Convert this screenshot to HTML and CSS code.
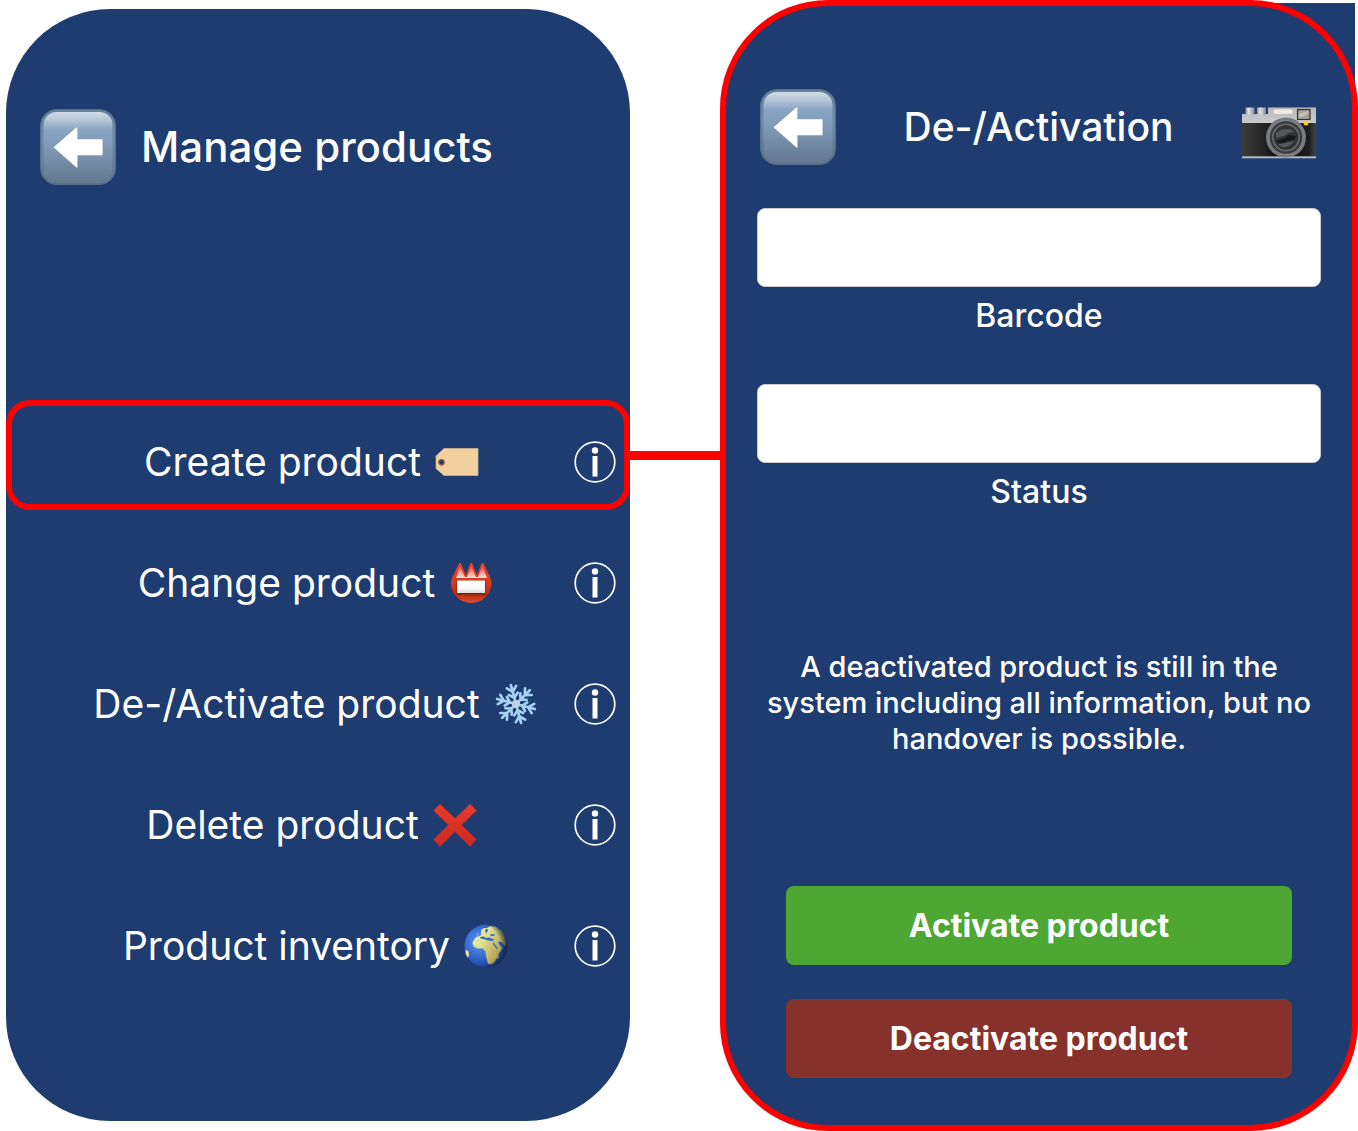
FILE: index.html
```html
<!DOCTYPE html>
<html lang="en">
<head>
<meta charset="utf-8">
<meta name="viewport" content="width=device-width, initial-scale=1">
<title>Manage products</title>
<link rel="stylesheet" href="styles.css">
</head>
<body>
<svg class="sprite" width="0" height="0" aria-hidden="true">
  <defs>
    <linearGradient id="keyEdge" x1="0" y1="0" x2="0" y2="1">
      <stop offset="0" stop-color="#657f9b"/><stop offset=".4" stop-color="#6c8aaa"/><stop offset="1" stop-color="#5c708a"/>
    </linearGradient>
    <linearGradient id="keyFace" x1="0" y1="0" x2="0" y2="1">
      <stop offset="0" stop-color="#d0dbe8"/><stop offset=".12" stop-color="#b3c4d6"/><stop offset=".25" stop-color="#88a4c3"/><stop offset=".45" stop-color="#819cba"/><stop offset="1" stop-color="#64788f"/>
    </linearGradient>
    <linearGradient id="badgeRed" x1="0" y1="0" x2="0" y2="1">
      <stop offset="0" stop-color="#e8442c"/><stop offset=".5" stop-color="#d33a20"/><stop offset=".8" stop-color="#b82a10"/><stop offset="1" stop-color="#e2502e"/>
    </linearGradient>
    <linearGradient id="badgeShine" x1="0" y1="0" x2="0" y2="1">
      <stop offset="0" stop-color="#f04a32"/><stop offset=".35" stop-color="#f0826e"/><stop offset="1" stop-color="#fbe6e2"/>
    </linearGradient>
    <linearGradient id="paper" x1="0" y1="0" x2="0" y2="1">
      <stop offset="0" stop-color="#fff"/><stop offset=".6" stop-color="#fafafa"/><stop offset="1" stop-color="#dcdcdc"/>
    </linearGradient>
    <linearGradient id="crossRed" x1="0" y1="0" x2="0" y2="1">
      <stop offset="0" stop-color="#ea3a2a"/><stop offset="1" stop-color="#cc2a20"/>
    </linearGradient>
    <linearGradient id="steel" x1="0" y1="0" x2="0" y2="1">
      <stop offset="0" stop-color="#b9babd"/><stop offset="1" stop-color="#c9cacd"/>
    </linearGradient>
    <linearGradient id="knob" x1="0" y1="0" x2="1" y2="0">
      <stop offset="0" stop-color="#8f9194"/><stop offset=".35" stop-color="#e4e5e6"/><stop offset="1" stop-color="#85878a"/>
    </linearGradient>
    <linearGradient id="leather" x1="0" y1="0" x2="1" y2="0">
      <stop offset="0" stop-color="#3c3c3c"/><stop offset=".3" stop-color="#242424"/><stop offset=".5" stop-color="#080808"/><stop offset=".9" stop-color="#1d1d1d"/><stop offset="1" stop-color="#444"/>
    </linearGradient>
    <radialGradient id="ocean" cx=".35" cy=".4" r=".65">
      <stop offset="0" stop-color="#5b9cf0"/><stop offset=".6" stop-color="#3263cc"/><stop offset="1" stop-color="#1d3c8c"/>
    </radialGradient>
    <linearGradient id="land" x1="0" y1="0" x2="1" y2=".6">
      <stop offset="0" stop-color="#f6f7c4"/><stop offset=".5" stop-color="#dfdf90"/><stop offset="1" stop-color="#a89a45"/>
    </linearGradient>
    <radialGradient id="night" cx=".36" cy=".48" r=".64">
      <stop offset=".72" stop-color="#10203c" stop-opacity="0"/><stop offset="1" stop-color="#14223c" stop-opacity=".85"/>
    </radialGradient>
    <path id="snow-arm" d="M0 0V-19.5M-4.800-17.500 0-12.500 4.800-17.500M-4.500-10.500 0-6.500 4.500-10.500"/>
  </defs>

  <symbol id="icon-back" viewBox="0 0 76 76">
    <rect x=".5" y=".5" width="75" height="75" rx="16" fill="url(#keyEdge)" stroke="#56708c"/>
    <rect x="3.5" y="3" width="69" height="71" rx="13" fill="url(#keyFace)"/>
    <path d="M13.300 38.300 36 18.500q1.700-1.300 1.700.8V30H62q.8 0 .8.8v14.800q0 .8-.8.8H37.700v11q0 2.200-1.700.8z" fill="#fff" stroke="#8d98a5" stroke-width=".5"/>
  </symbol>

  <symbol id="icon-info" viewBox="0 0 42 42">
    <circle cx="21" cy="21" r="19.8" fill="none" stroke="#fff" stroke-width="1.7"/>
    <circle cx="21" cy="9.5" r="3.2" fill="#fff"/>
    <rect x="18.5" y="15" width="5" height="20.5" fill="#fff"/>
  </symbol>

  <symbol id="icon-tag" viewBox="0 0 44 44">
    <path d="M9 8.500H43V35.500H9L1 28.500V16z" fill="#f2cf9f" stroke="#d9b98e" stroke-width=".7"/>
    <circle cx="6.500" cy="22.300" r="2.700" fill="#27345c" stroke="#8a5f50" stroke-width="1.300"/>
  </symbol>

  <symbol id="icon-badge" viewBox="0 0 44 44">
    <path d="M10 2.500q1-1.500 2 0L16.800 14 21.300 2.500q1-1.500 2 0L28 14 32.500 2.500q1-1.500 2 0L39.500 13q3 4 3 9.500a20.300 19.500 0 0 1-40.600 0q0-5.500 3-9.500z" fill="url(#badgeRed)"/>
    <path d="M11 5 15.800 16h2.200L22.300 5 26.800 16h2.200L33.500 5 38 17H7z" fill="url(#badgeShine)"/>
    <rect x="7.500" y="19.500" width="29" height="14" fill="#7c1c0a"/>
    <rect x="8" y="19.500" width="28" height="12.500" fill="url(#paper)"/>
  </symbol>

  <symbol id="icon-snow" viewBox="0 0 44 44">
    <g transform="translate(22 22) rotate(-15)" fill="none" stroke="#a3d2f3" stroke-width="2.700" stroke-linecap="round">
      <use href="#snow-arm"/>
      <use href="#snow-arm" transform="rotate(60)"/>
      <use href="#snow-arm" transform="rotate(120)"/>
      <use href="#snow-arm" transform="rotate(180)"/>
      <use href="#snow-arm" transform="rotate(240)"/>
      <use href="#snow-arm" transform="rotate(300)"/>
    </g>
    <circle cx="22" cy="22" r="4" fill="#bcd3ea"/>
  </symbol>

  <symbol id="icon-cross" viewBox="0 0 44 44">
    <path d="M7 1 22 15.500 37 1 43.500 7.500 28.500 22 43.500 36.500 37 43.500 22 28.500 7 43.500.500 36.500 15.500 22 .500 7.500z" fill="url(#crossRed)" stroke="#a8322c" stroke-width=".5"/>
  </symbol>

  <symbol id="icon-globe" viewBox="0 0 44 44">
    <circle cx="22" cy="22" r="21.500" fill="url(#ocean)"/>
    <path d="M13 12l1-2 3-1 0-3 3-2 3 0 3-2 5 .5 6 4 4 6 1.500 6-.5 3-2 0-2-3-3-1-1 1 3 4 2 .5-2 4-3 3-1 4-3 5-3 1.500-3-1-2-7-.5-5-3-3h-5l-4-2-1-4 3-5 5-2 1-2-4 0zM1.500 26l3 1 .5 4-1 3-2.300-4zM33 32l2-2-.5 4-1.500 1.500z" fill="url(#land)"/>
    <path d="M16 13l4-.5 2 1.500 3-.5 5 2-1 1.500-5-.5-4-1.500-3-.3zM21 6l2-1.500 1 2-2 3zM26 10.500l4-.5 1 1.500-4 .8zM29 18l4 5 1 2-1 .3-4-5z" fill="#3566c8"/>
    <circle cx="22" cy="22" r="21.500" fill="url(#night)"/>
  </symbol>

  <symbol id="icon-camera" viewBox="0 0 76 52">
    <path d="M1 7h26V.5h48V16H1z" fill="url(#steel)"/>
    <rect x="4.500" y=".5" width="9" height="7" fill="url(#knob)"/>
    <rect x="16" y=".5" width="9" height="7" fill="url(#knob)"/>
    <rect x="1" y="16" width="74" height="34" fill="url(#leather)"/>
    <rect x="1" y="49.300" width="74" height="2" fill="#b9babd"/>
    <rect x="32" y="2" width="20" height="5.500" rx="2" fill="#eeeae0" stroke="#aaa" stroke-width=".5"/>
    <rect x="56.500" y="2.500" width="12.500" height="10" fill="#a59e97" stroke="#333" stroke-width="1.200"/>
    <path d="M58 7l9-3v3l-9 4z" fill="#c4beb8"/>
    <circle cx="45" cy="30.500" r="20" fill="#77797c"/>
    <circle cx="45" cy="30.500" r="16.800" fill="#393b3d" stroke="#96989b" stroke-width=".7"/>
    <circle cx="45" cy="30.500" r="14" fill="#66686a"/>
    <circle cx="45" cy="30.500" r="12.200" fill="#303233"/>
    <path d="M35 26q9-8 19-1l-7 1-4 3-8 2z" fill="#53575a"/>
    <path d="M35 34l9-3 4-3 7 1-2 4-6 1-8 3z" fill="#171819"/>
    <path d="M37 37l8-1 8-2q-6 9-14 5z" fill="#55595b"/>
    <circle cx="65" cy="16" r="2.500" fill="#f3cf3f"/>
  </symbol>
</svg>

<main class="board">
  <section class="phone phone--menu" aria-labelledby="menu-title">
    <header class="topbar">
      <button class="icon-button" type="button" aria-label="Back"><svg class="icon-key"><use href="#icon-back"/></svg></button>
      <h1 class="title title--large" id="menu-title">Manage products</h1>
    </header>
    <ul class="menu">
      <li class="menu-row menu-row--selected">
        <a class="menu-link menu-link--spaced" href="#activation">Create product <svg class="emoji"><use href="#icon-tag"/></svg></a>
        <button class="icon-button" type="button" aria-label="About Create product"><svg class="icon-info"><use href="#icon-info"/></svg></button>
      </li>
      <li class="menu-row">
        <a class="menu-link" href="#change">Change product <svg class="emoji"><use href="#icon-badge"/></svg></a>
        <button class="icon-button" type="button" aria-label="About Change product"><svg class="icon-info"><use href="#icon-info"/></svg></button>
      </li>
      <li class="menu-row">
        <a class="menu-link" href="#activation">De-/Activate product <svg class="emoji"><use href="#icon-snow"/></svg></a>
        <button class="icon-button" type="button" aria-label="About De-/Activate product"><svg class="icon-info"><use href="#icon-info"/></svg></button>
      </li>
      <li class="menu-row">
        <a class="menu-link menu-link--spaced" href="#delete">Delete product <svg class="emoji"><use href="#icon-cross"/></svg></a>
        <button class="icon-button" type="button" aria-label="About Delete product"><svg class="icon-info"><use href="#icon-info"/></svg></button>
      </li>
      <li class="menu-row">
        <a class="menu-link" href="#inventory">Product inventory <svg class="emoji"><use href="#icon-globe"/></svg></a>
        <button class="icon-button" type="button" aria-label="About Product inventory"><svg class="icon-info"><use href="#icon-info"/></svg></button>
      </li>
    </ul>
  </section>

  <div class="connector"></div>

  <div class="detail">
    <section class="phone phone--detail" id="activation" aria-labelledby="detail-title">
      <header class="topbar topbar--spread">
        <button class="icon-button" type="button" aria-label="Back"><svg class="icon-key"><use href="#icon-back"/></svg></button>
        <h2 class="title" id="detail-title">De-/Activation</h2>
        <button class="icon-button" type="button" aria-label="Scan barcode"><svg class="icon-camera"><use href="#icon-camera"/></svg></button>
      </header>
      <form class="form">
        <div class="field">
          <input class="field-input" id="barcode" type="text">
          <label class="field-label" for="barcode">Barcode</label>
        </div>
        <div class="field">
          <input class="field-input" id="status" type="text">
          <label class="field-label" for="status">Status</label>
        </div>
        <p class="note">A deactivated product is still in the system including all information, but no handover is possible.</p>
        <div class="actions">
          <button class="action action--on" type="button">Activate product</button>
          <button class="action action--off" type="button">Deactivate product</button>
        </div>
      </form>
    </section>
  </div>
</main>
</body>
</html>
```
FILE: styles.css
```css
:root {
  --navy: #1e3c70;
  --red: #ff0000;
}

* {
  box-sizing: border-box;
}

body {
  margin: 0;
  background: #fff;
  color: #fff;
  font-family: Inter, "Liberation Sans", sans-serif;
}

.sprite {
  position: absolute;
}

.board {
  display: grid;
  grid-template-columns: minmax(0, 624fr) 90px minmax(0, 638fr);
  align-items: start;
  padding-left: 6px;
}

.phone {
  background: var(--navy);
}

.phone--menu {
  margin-top: 9px;
  padding: 100px 0 127px;
  border-radius: 104px;
}

.connector {
  height: 9px;
  margin-top: 451px;
  background: var(--red);
}

/* Square navy corner behind the rounded frame */
.detail {
  background: linear-gradient(var(--navy), var(--navy)) right 3px top 3px / 110px 110px no-repeat;
}

.phone--detail {
  padding: 83px 31px 47px;
  border: 6px solid var(--red);
  border-radius: 108px;
}

.topbar {
  display: flex;
  align-items: center;
  gap: 25px;
  padding: 0 34px;
}

.topbar--spread {
  justify-content: space-between;
  padding: 0 4px 0 3px;
}

.title {
  margin: 0;
  font-size: 39px;
  font-weight: 500;
  line-height: 56px;
}

.title--large {
  font-size: 42px;
}

.icon-button {
  display: flex;
  padding: 0;
  border: 0;
  background: none;
  cursor: pointer;
}

.icon-key {
  width: 76px;
  height: 76px;
}

.icon-camera {
  width: 76px;
  height: 52px;
  margin-top: 12px;
}

.icon-info {
  width: 42px;
  height: 42px;
}

.menu {
  display: grid;
  gap: 11px;
  margin: 215px 0 0;
  padding: 0;
  list-style: none;
}

.menu-row {
  display: grid;
  grid-template-columns: 1fr 42px;
  align-items: center;
  padding: 30px 8px 16px 45px;
  border: 6px solid transparent;
  border-radius: 24px;
}

.menu-row--selected {
  border-color: var(--red);
}

.menu-link {
  display: flex;
  align-items: center;
  justify-content: center;
  gap: 14px;
  color: inherit;
  font-size: 39px;
  line-height: 52px;
  text-decoration: none;
  white-space: nowrap;
}

.menu-link--spaced {
  padding-right: 8px;
}

.emoji {
  width: 44px;
  height: 44px;
}

.form {
  display: grid;
  margin-top: 43px;
}

.field {
  display: grid;
  gap: 9px;
  margin-bottom: 48px;
}

.field-input {
  width: 100%;
  height: 79px;
  padding: 0 16px;
  border: 1px solid #ccc;
  border-radius: 8px;
  background: #fff;
  font: inherit;
  font-size: 32px;
}

.field-label {
  font-size: 32px;
  font-weight: 500;
  line-height: 40px;
  text-align: center;
}

.note {
  margin: 89px 0 129px;
  font-size: 29px;
  font-weight: 500;
  line-height: 36px;
  text-align: center;
}

.actions {
  display: grid;
  gap: 34px;
  padding: 0 29px;
}

.action {
  padding: 20px 16px 19px;
  border: 0;
  border-radius: 8px;
  color: #fff;
  font: inherit;
  font-size: 32px;
  font-weight: 700;
  line-height: 40px;
  cursor: pointer;
}

.action--on {
  background: #4fa733;
}

.action--off {
  background: #86312b;
}
```
